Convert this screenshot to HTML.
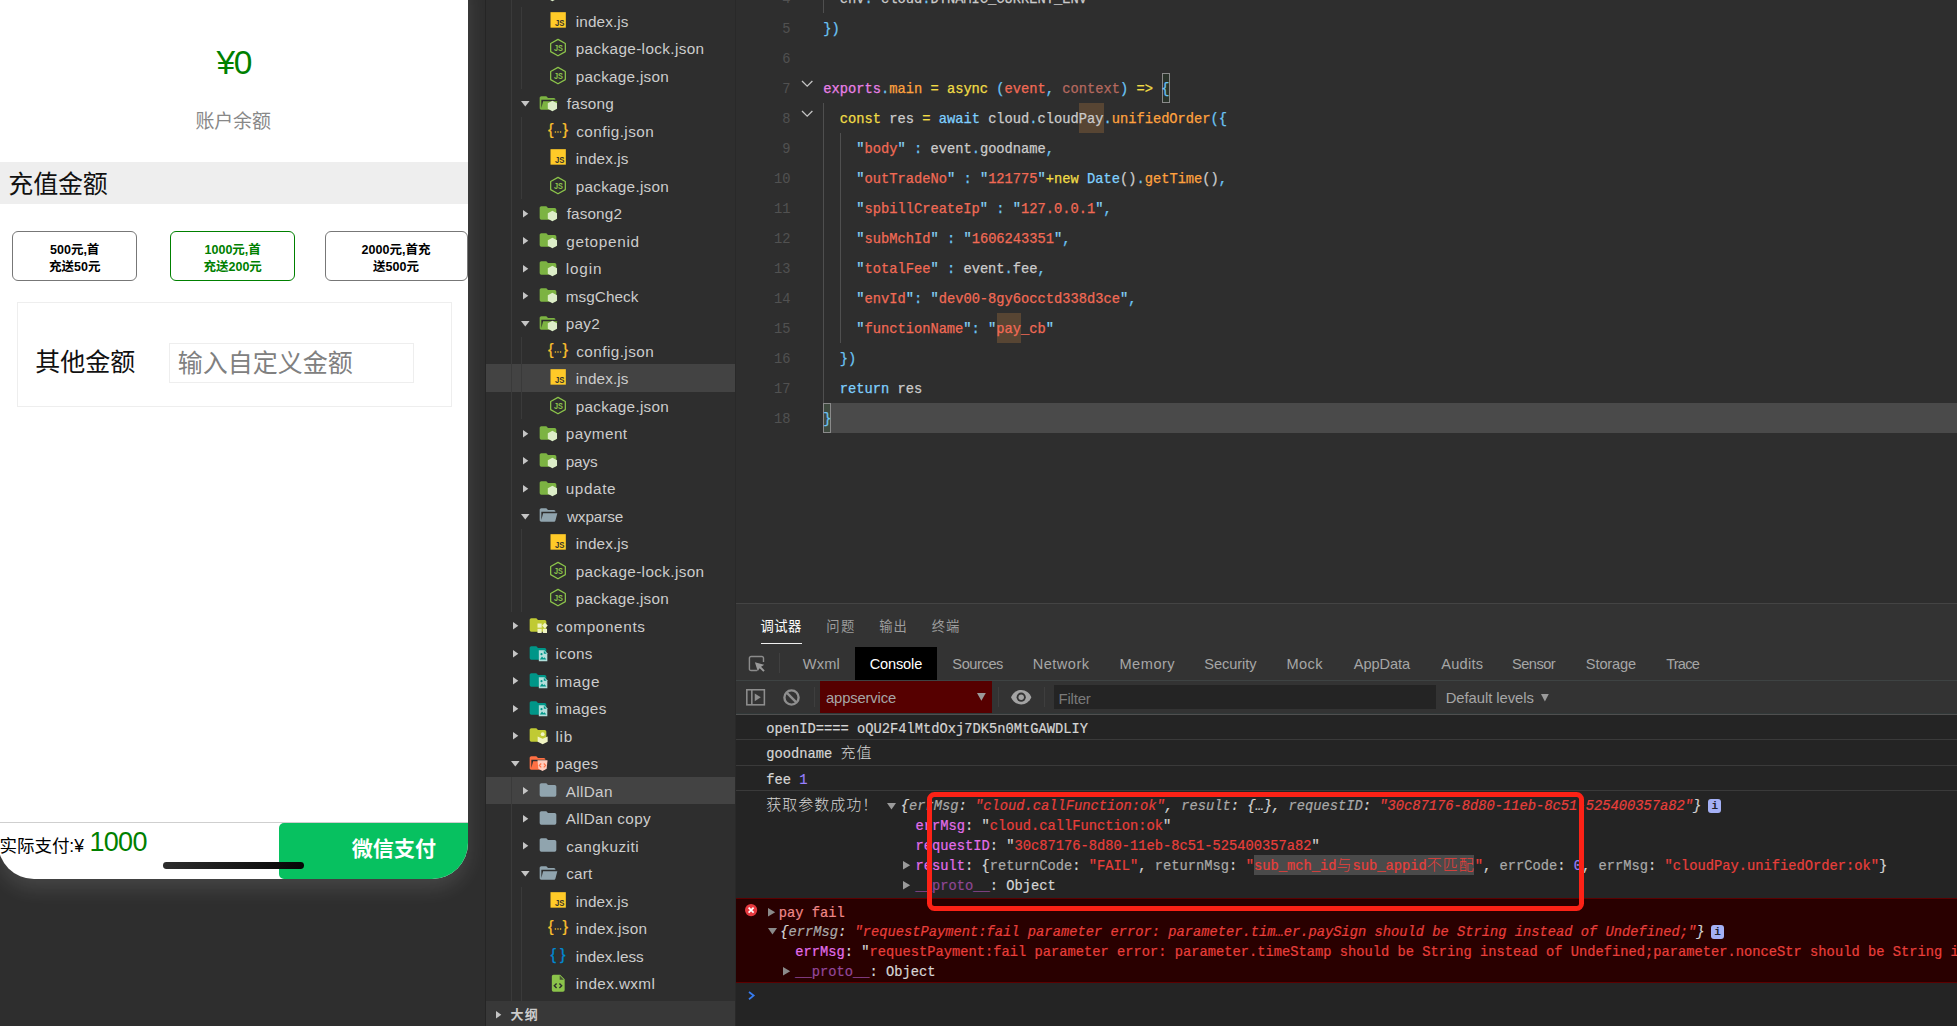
<!DOCTYPE html>
<html lang="zh-CN"><head><meta charset="utf-8"><title>pay2 index.js</title>
<style>
html,body{margin:0;padding:0;background:#2e2e2e;}
body{width:1957px;height:1026px;overflow:hidden;position:relative;font-family:'Liberation Sans','Noto Sans CJK SC',sans-serif;}
.a{position:absolute;box-sizing:border-box;}
.t{white-space:pre;}
svg{position:absolute;overflow:visible;}
.m{font-family:'Liberation Mono','Noto Sans CJK SC',monospace;}
.c{font-size:15px;letter-spacing:1px;font-weight:300;-webkit-text-stroke:0;}
.k2{-webkit-text-stroke:.2px currentColor;}
.k{-webkit-text-stroke:.25px currentColor;letter-spacing:-0.015px;}
</style></head>
<body>
<div class="a" style="left:0px;top:0px;width:485px;height:1026px;background:#2e2e2e;"></div>
<div class="a" style="left:485px;top:0px;width:1px;height:1026px;background:#252525;"></div>
<div class="a" style="left:-2px;top:-20px;width:470px;height:898.5px;background:#fff;border-radius:0 0 36px 36px;box-shadow:0 10px 20px rgba(255,255,255,.115);"></div>
<div class="a t " style="top:39.1px;height:47px;line-height:47px;font-size:33.5px;color:#008000;left:33.7px;width:400px;text-align:center;letter-spacing:-1.4px;"><span id="t1">¥0</span></div>
<div class="a t " style="top:108px;height:27px;line-height:27px;font-size:19px;color:#888;left:195.41px;letter-spacing:-0.17px;"><span id="t2">账户余额</span></div>
<div class="a" style="left:0px;top:162px;width:468px;height:42px;background:#eee;"></div>
<div class="a t " style="top:166.7px;height:35px;line-height:35px;font-size:25px;color:#111;left:8.33px;letter-spacing:-0.18px;"><span id="t3">充值金额</span></div>
<div class="a" style="left:12px;top:231px;width:125px;height:49.5px;border:1px solid #777;border-radius:6px;"></div>
<div class="a t " style="top:242px;height:17px;line-height:17px;font-size:12.5px;color:#000;left:-125.3px;width:400px;text-align:center;font-weight:bold;"><span id="t4">500元,首</span></div>
<div class="a t " style="top:258.9px;height:17px;line-height:17px;font-size:12.5px;color:#000;left:-125.3px;width:400px;text-align:center;font-weight:bold;"><span id="t5">充送50元</span></div>
<div class="a" style="left:170px;top:231px;width:125px;height:49.5px;border:1px solid #008000;border-radius:6px;"></div>
<div class="a t " style="top:242px;height:17px;line-height:17px;font-size:12.5px;color:#008000;left:32.7px;width:400px;text-align:center;font-weight:bold;"><span id="t6">1000元,首</span></div>
<div class="a t " style="top:258.9px;height:17px;line-height:17px;font-size:12.5px;color:#008000;left:32.7px;width:400px;text-align:center;font-weight:bold;"><span id="t7">充送200元</span></div>
<div class="a" style="left:325px;top:231px;width:142.5px;height:49.5px;border:1px solid #777;border-radius:6px;"></div>
<div class="a t " style="top:242px;height:17px;line-height:17px;font-size:12.5px;color:#000;left:196px;width:400px;text-align:center;font-weight:bold;"><span id="t8">2000元,首充</span></div>
<div class="a t " style="top:258.9px;height:17px;line-height:17px;font-size:12.5px;color:#000;left:196px;width:400px;text-align:center;font-weight:bold;"><span id="t9">送500元</span></div>
<div class="a" style="left:17px;top:302px;width:435px;height:105px;border:1px solid #eee;"></div>
<div class="a t " style="top:344.7px;height:35px;line-height:35px;font-size:25px;color:#111;left:35.22px;letter-spacing:0.02px;"><span id="t10">其他金额</span></div>
<div class="a" style="left:169px;top:343px;width:245px;height:40px;border:1px solid #eee;"></div>
<div class="a t " style="top:345.5px;height:35px;line-height:35px;font-size:25px;color:#808080;left:177.72px;letter-spacing:0.01px;"><span id="t11">输入自定义金额</span></div>
<div class="a" style="left:0px;top:822px;width:468px;height:1px;background:#cfcfcf;"></div>
<div class="a t " style="top:833.7px;height:24px;line-height:24px;font-size:17.5px;color:#000;left:-0.49px;letter-spacing:-0.04px;"><span id="t12">实际支付:¥</span></div>
<div class="a t " style="top:823.4px;height:38px;line-height:38px;font-size:27px;color:#008000;left:89.41px;letter-spacing:-0.67px;"><span id="t13">1000</span></div>
<div class="a" style="left:279px;top:823px;width:189px;height:55.5px;background:#07c160;border-radius:5px 0 36px 5px;"></div>
<div class="a t " style="top:834.4px;height:29px;line-height:29px;font-size:21px;color:#fff;left:351.8px;font-weight:bold;letter-spacing:0.05px;"><span id="t14">微信支付</span></div>
<div class="a" style="left:163px;top:862px;width:140.5px;height:6.7px;border-radius:3.4px;background:linear-gradient(90deg,#2d2d2d,#060606);"></div>
<div class="a" style="left:486px;top:0px;width:249px;height:1026px;background:#2e2e2e;"></div>
<div class="a" style="left:735px;top:0px;width:1px;height:1026px;background:#292929;"></div>
<div class="a" style="left:486px;top:364.25px;width:249px;height:27.5px;background:#434343;"></div>
<div class="a" style="left:486px;top:776.75px;width:249px;height:27.5px;background:#434343;"></div>
<div class="a" style="left:511px;top:0px;width:1px;height:611.75px;background:#3a3a3a;"></div>
<div class="a" style="left:511px;top:776.75px;width:1px;height:224.25px;background:#3a3a3a;"></div>
<div class="a" style="left:521px;top:6.75px;width:1px;height:82.5px;background:#3a3a3a;"></div>
<div class="a" style="left:521px;top:116.75px;width:1px;height:82.5px;background:#3a3a3a;"></div>
<div class="a" style="left:521px;top:336.75px;width:1px;height:82.5px;background:#3a3a3a;"></div>
<div class="a" style="left:521px;top:529.25px;width:1px;height:82.5px;background:#3a3a3a;"></div>
<div class="a" style="left:521px;top:886.75px;width:1px;height:114.25px;background:#3a3a3a;"></div>
<svg style="left:548px;top:10.5px" width="20" height="20" viewBox="0 0 24 24"><rect x="3" y="1.4" width="18.4" height="18.6" fill="#ffca28"/><text x="8.4" y="17.8" font-family='"Liberation Sans",sans-serif' font-weight="bold" font-size="10.6" textLength="11.4" lengthAdjust="spacingAndGlyphs" fill="#37352b">JS</text></svg>
<div class="a t " style="top:10.7px;height:22px;line-height:22px;font-size:15.3px;color:#cccccc;left:575.74px;letter-spacing:0.12px;"><span id="t15">index.js</span></div>
<svg style="left:548px;top:38px" width="20" height="20" viewBox="0 0 24 24"><path d="M12 1.6 20.8 6.6v9.700L12 21.3 3.2 16.3V6.600z" fill="none" stroke="#8bc34a" stroke-width="1.5" stroke-linejoin="round"/><text x="12.5" y="15.2" text-anchor="middle" font-family='"Liberation Sans",sans-serif' font-weight="bold" font-size="9.8" textLength="10.8" lengthAdjust="spacingAndGlyphs" fill="#8bc34a">JS</text></svg>
<div class="a t " style="top:38.2px;height:22px;line-height:22px;font-size:15.3px;color:#cccccc;left:575.74px;letter-spacing:0.37px;"><span id="t16">package-lock.json</span></div>
<svg style="left:548px;top:65.5px" width="20" height="20" viewBox="0 0 24 24"><path d="M12 1.6 20.8 6.6v9.700L12 21.3 3.2 16.3V6.600z" fill="none" stroke="#8bc34a" stroke-width="1.5" stroke-linejoin="round"/><text x="12.5" y="15.2" text-anchor="middle" font-family='"Liberation Sans",sans-serif' font-weight="bold" font-size="9.8" textLength="10.8" lengthAdjust="spacingAndGlyphs" fill="#8bc34a">JS</text></svg>
<div class="a t " style="top:65.7px;height:22px;line-height:22px;font-size:15.3px;color:#cccccc;left:575.74px;letter-spacing:0.26px;"><span id="t17">package.json</span></div>
<svg style="left:521.1px;top:101.2px" width="8.6" height="5.6" viewBox="0 0 8.6 5.6"><path d="M0 0h8.6L4.3 5.6z" fill="#c5c5c5"/></svg>
<svg style="left:538px;top:92.7px" width="20" height="20" viewBox="0 0 24 24"><path d="M19 20H4c-1.11 0-2-.9-2-2V6c0-1.11.89-2 2-2h6l2 2h7a2 2 0 0 1 2 2H4v10l2.14-8h17.07l-2.28 8.5c-.23.87-1.01 1.5-1.93 1.5z" fill="#7cb342"/><polygon points="17.30,9.20 22.84,12.40 22.84,18.80 17.30,22.00 11.76,18.80 11.76,12.40" fill="#dcedc8"/></svg>
<div class="a t " style="top:93.2px;height:22px;line-height:22px;font-size:15.3px;color:#cccccc;left:566.7px;letter-spacing:0.24px;"><span id="t18">fasong</span></div>
<svg style="left:548px;top:120.5px" width="20" height="20" viewBox="0 0 24 24"><text x="12" y="16.8" text-anchor="middle" font-family='"Liberation Sans",sans-serif' font-size="20" textLength="24" lengthAdjust="spacing" fill="#fbc02d" stroke="#fbc02d" stroke-width=".25">{ }</text><circle cx="8.9" cy="13.2" r="1" fill="#fbc02d"/><circle cx="12" cy="13.2" r="1" fill="#fbc02d"/><circle cx="15.1" cy="13.2" r="1" fill="#fbc02d"/></svg>
<div class="a t " style="top:120.7px;height:22px;line-height:22px;font-size:15.3px;color:#cccccc;left:576.22px;letter-spacing:0.44px;"><span id="t19">config.json</span></div>
<svg style="left:548px;top:148px" width="20" height="20" viewBox="0 0 24 24"><rect x="3" y="1.4" width="18.4" height="18.6" fill="#ffca28"/><text x="8.4" y="17.8" font-family='"Liberation Sans",sans-serif' font-weight="bold" font-size="10.6" textLength="11.4" lengthAdjust="spacingAndGlyphs" fill="#37352b">JS</text></svg>
<div class="a t " style="top:148.2px;height:22px;line-height:22px;font-size:15.3px;color:#cccccc;left:575.74px;letter-spacing:0.12px;"><span id="t20">index.js</span></div>
<svg style="left:548px;top:175.5px" width="20" height="20" viewBox="0 0 24 24"><path d="M12 1.6 20.8 6.6v9.700L12 21.3 3.2 16.3V6.600z" fill="none" stroke="#8bc34a" stroke-width="1.5" stroke-linejoin="round"/><text x="12.5" y="15.2" text-anchor="middle" font-family='"Liberation Sans",sans-serif' font-weight="bold" font-size="9.8" textLength="10.8" lengthAdjust="spacingAndGlyphs" fill="#8bc34a">JS</text></svg>
<div class="a t " style="top:175.7px;height:22px;line-height:22px;font-size:15.3px;color:#cccccc;left:575.74px;letter-spacing:0.26px;"><span id="t21">package.json</span></div>
<svg style="left:522.8px;top:209.7px" width="5.3" height="7.6" viewBox="0 0 5.3 7.6"><path d="M0 0v7.6L5.3 3.8z" fill="#c5c5c5"/></svg>
<svg style="left:538px;top:202.7px" width="20" height="20" viewBox="0 0 24 24"><path d="M10 4H4c-1.11 0-2 .89-2 2v12a2 2 0 0 0 2 2h16a2 2 0 0 0 2-2V8c0-1.11-.9-2-2-2h-8l-2-2z" fill="#7cb342"/><polygon points="17.30,9.20 22.84,12.40 22.84,18.80 17.30,22.00 11.76,18.80 11.76,12.40" fill="#dcedc8"/></svg>
<div class="a t " style="top:203.2px;height:22px;line-height:22px;font-size:15.3px;color:#cccccc;left:566.7px;letter-spacing:0.13px;"><span id="t22">fasong2</span></div>
<svg style="left:522.8px;top:237.2px" width="5.3" height="7.6" viewBox="0 0 5.3 7.6"><path d="M0 0v7.6L5.3 3.8z" fill="#c5c5c5"/></svg>
<svg style="left:538px;top:230.2px" width="20" height="20" viewBox="0 0 24 24"><path d="M10 4H4c-1.11 0-2 .89-2 2v12a2 2 0 0 0 2 2h16a2 2 0 0 0 2-2V8c0-1.11-.9-2-2-2h-8l-2-2z" fill="#7cb342"/><polygon points="17.30,9.20 22.84,12.40 22.84,18.80 17.30,22.00 11.76,18.80 11.76,12.40" fill="#dcedc8"/></svg>
<div class="a t " style="top:230.7px;height:22px;line-height:22px;font-size:15.3px;color:#cccccc;left:566.22px;letter-spacing:0.71px;"><span id="t23">getopenid</span></div>
<svg style="left:522.8px;top:264.7px" width="5.3" height="7.6" viewBox="0 0 5.3 7.6"><path d="M0 0v7.6L5.3 3.8z" fill="#c5c5c5"/></svg>
<svg style="left:538px;top:257.7px" width="20" height="20" viewBox="0 0 24 24"><path d="M10 4H4c-1.11 0-2 .89-2 2v12a2 2 0 0 0 2 2h16a2 2 0 0 0 2-2V8c0-1.11-.9-2-2-2h-8l-2-2z" fill="#7cb342"/><polygon points="17.30,9.20 22.84,12.40 22.84,18.80 17.30,22.00 11.76,18.80 11.76,12.40" fill="#dcedc8"/></svg>
<div class="a t " style="top:258.2px;height:22px;line-height:22px;font-size:15.3px;color:#cccccc;left:565.74px;letter-spacing:0.85px;"><span id="t24">login</span></div>
<svg style="left:522.8px;top:292.2px" width="5.3" height="7.6" viewBox="0 0 5.3 7.6"><path d="M0 0v7.6L5.3 3.8z" fill="#c5c5c5"/></svg>
<svg style="left:538px;top:285.2px" width="20" height="20" viewBox="0 0 24 24"><path d="M10 4H4c-1.11 0-2 .89-2 2v12a2 2 0 0 0 2 2h16a2 2 0 0 0 2-2V8c0-1.11-.9-2-2-2h-8l-2-2z" fill="#7cb342"/><polygon points="17.30,9.20 22.84,12.40 22.84,18.80 17.30,22.00 11.76,18.80 11.76,12.40" fill="#dcedc8"/></svg>
<div class="a t " style="top:285.7px;height:22px;line-height:22px;font-size:15.3px;color:#cccccc;left:565.74px;letter-spacing:0.05px;"><span id="t25">msgCheck</span></div>
<svg style="left:521.1px;top:321.2px" width="8.6" height="5.6" viewBox="0 0 8.6 5.6"><path d="M0 0h8.6L4.3 5.6z" fill="#c5c5c5"/></svg>
<svg style="left:538px;top:312.7px" width="20" height="20" viewBox="0 0 24 24"><path d="M19 20H4c-1.11 0-2-.9-2-2V6c0-1.11.89-2 2-2h6l2 2h7a2 2 0 0 1 2 2H4v10l2.14-8h17.07l-2.28 8.5c-.23.87-1.01 1.5-1.93 1.5z" fill="#7cb342"/><polygon points="17.30,9.20 22.84,12.40 22.84,18.80 17.30,22.00 11.76,18.80 11.76,12.40" fill="#dcedc8"/></svg>
<div class="a t " style="top:313.2px;height:22px;line-height:22px;font-size:15.3px;color:#cccccc;left:565.74px;letter-spacing:0.27px;"><span id="t26">pay2</span></div>
<svg style="left:548px;top:340.5px" width="20" height="20" viewBox="0 0 24 24"><text x="12" y="16.8" text-anchor="middle" font-family='"Liberation Sans",sans-serif' font-size="20" textLength="24" lengthAdjust="spacing" fill="#fbc02d" stroke="#fbc02d" stroke-width=".25">{ }</text><circle cx="8.9" cy="13.2" r="1" fill="#fbc02d"/><circle cx="12" cy="13.2" r="1" fill="#fbc02d"/><circle cx="15.1" cy="13.2" r="1" fill="#fbc02d"/></svg>
<div class="a t " style="top:340.7px;height:22px;line-height:22px;font-size:15.3px;color:#cccccc;left:576.22px;letter-spacing:0.44px;"><span id="t27">config.json</span></div>
<svg style="left:548px;top:368px" width="20" height="20" viewBox="0 0 24 24"><rect x="3" y="1.4" width="18.4" height="18.6" fill="#ffca28"/><text x="8.4" y="17.8" font-family='"Liberation Sans",sans-serif' font-weight="bold" font-size="10.6" textLength="11.4" lengthAdjust="spacingAndGlyphs" fill="#37352b">JS</text></svg>
<div class="a t " style="top:368.2px;height:22px;line-height:22px;font-size:15.3px;color:#cccccc;left:575.74px;letter-spacing:0.12px;"><span id="t28">index.js</span></div>
<svg style="left:548px;top:395.5px" width="20" height="20" viewBox="0 0 24 24"><path d="M12 1.6 20.8 6.6v9.700L12 21.3 3.2 16.3V6.600z" fill="none" stroke="#8bc34a" stroke-width="1.5" stroke-linejoin="round"/><text x="12.5" y="15.2" text-anchor="middle" font-family='"Liberation Sans",sans-serif' font-weight="bold" font-size="9.8" textLength="10.8" lengthAdjust="spacingAndGlyphs" fill="#8bc34a">JS</text></svg>
<div class="a t " style="top:395.7px;height:22px;line-height:22px;font-size:15.3px;color:#cccccc;left:575.74px;letter-spacing:0.26px;"><span id="t29">package.json</span></div>
<svg style="left:522.8px;top:429.7px" width="5.3" height="7.6" viewBox="0 0 5.3 7.6"><path d="M0 0v7.6L5.3 3.8z" fill="#c5c5c5"/></svg>
<svg style="left:538px;top:422.7px" width="20" height="20" viewBox="0 0 24 24"><path d="M10 4H4c-1.11 0-2 .89-2 2v12a2 2 0 0 0 2 2h16a2 2 0 0 0 2-2V8c0-1.11-.9-2-2-2h-8l-2-2z" fill="#7cb342"/><polygon points="17.30,9.20 22.84,12.40 22.84,18.80 17.30,22.00 11.76,18.80 11.76,12.40" fill="#dcedc8"/></svg>
<div class="a t " style="top:423.2px;height:22px;line-height:22px;font-size:15.3px;color:#cccccc;left:565.74px;letter-spacing:0.45px;"><span id="t30">payment</span></div>
<svg style="left:522.8px;top:457.2px" width="5.3" height="7.6" viewBox="0 0 5.3 7.6"><path d="M0 0v7.6L5.3 3.8z" fill="#c5c5c5"/></svg>
<svg style="left:538px;top:450.2px" width="20" height="20" viewBox="0 0 24 24"><path d="M10 4H4c-1.11 0-2 .89-2 2v12a2 2 0 0 0 2 2h16a2 2 0 0 0 2-2V8c0-1.11-.9-2-2-2h-8l-2-2z" fill="#7cb342"/><polygon points="17.30,9.20 22.84,12.40 22.84,18.80 17.30,22.00 11.76,18.80 11.76,12.40" fill="#dcedc8"/></svg>
<div class="a t " style="top:450.7px;height:22px;line-height:22px;font-size:15.3px;color:#cccccc;left:565.74px;letter-spacing:-0.13px;"><span id="t31">pays</span></div>
<svg style="left:522.8px;top:484.7px" width="5.3" height="7.6" viewBox="0 0 5.3 7.6"><path d="M0 0v7.6L5.3 3.8z" fill="#c5c5c5"/></svg>
<svg style="left:538px;top:477.7px" width="20" height="20" viewBox="0 0 24 24"><path d="M10 4H4c-1.11 0-2 .89-2 2v12a2 2 0 0 0 2 2h16a2 2 0 0 0 2-2V8c0-1.11-.9-2-2-2h-8l-2-2z" fill="#7cb342"/><polygon points="17.30,9.20 22.84,12.40 22.84,18.80 17.30,22.00 11.76,18.80 11.76,12.40" fill="#dcedc8"/></svg>
<div class="a t " style="top:478.2px;height:22px;line-height:22px;font-size:15.3px;color:#cccccc;left:565.74px;letter-spacing:0.62px;"><span id="t32">update</span></div>
<svg style="left:521.1px;top:513.7px" width="8.6" height="5.6" viewBox="0 0 8.6 5.6"><path d="M0 0h8.6L4.3 5.6z" fill="#c5c5c5"/></svg>
<svg style="left:538px;top:505.2px" width="20" height="20" viewBox="0 0 24 24"><path d="M19 20H4c-1.11 0-2-.9-2-2V6c0-1.11.89-2 2-2h6l2 2h7a2 2 0 0 1 2 2H4v10l2.14-8h17.07l-2.28 8.5c-.23.87-1.01 1.5-1.93 1.5z" fill="#90a4ae"/></svg>
<div class="a t " style="top:505.7px;height:22px;line-height:22px;font-size:15.3px;color:#cccccc;left:566.94px;letter-spacing:-0.12px;"><span id="t33">wxparse</span></div>
<svg style="left:548px;top:533px" width="20" height="20" viewBox="0 0 24 24"><rect x="3" y="1.4" width="18.4" height="18.6" fill="#ffca28"/><text x="8.4" y="17.8" font-family='"Liberation Sans",sans-serif' font-weight="bold" font-size="10.6" textLength="11.4" lengthAdjust="spacingAndGlyphs" fill="#37352b">JS</text></svg>
<div class="a t " style="top:533.2px;height:22px;line-height:22px;font-size:15.3px;color:#cccccc;left:575.74px;letter-spacing:0.12px;"><span id="t34">index.js</span></div>
<svg style="left:548px;top:560.5px" width="20" height="20" viewBox="0 0 24 24"><path d="M12 1.6 20.8 6.6v9.700L12 21.3 3.2 16.3V6.600z" fill="none" stroke="#8bc34a" stroke-width="1.5" stroke-linejoin="round"/><text x="12.5" y="15.2" text-anchor="middle" font-family='"Liberation Sans",sans-serif' font-weight="bold" font-size="9.8" textLength="10.8" lengthAdjust="spacingAndGlyphs" fill="#8bc34a">JS</text></svg>
<div class="a t " style="top:560.7px;height:22px;line-height:22px;font-size:15.3px;color:#cccccc;left:575.74px;letter-spacing:0.37px;"><span id="t35">package-lock.json</span></div>
<svg style="left:548px;top:588px" width="20" height="20" viewBox="0 0 24 24"><path d="M12 1.6 20.8 6.6v9.700L12 21.3 3.2 16.3V6.600z" fill="none" stroke="#8bc34a" stroke-width="1.5" stroke-linejoin="round"/><text x="12.5" y="15.2" text-anchor="middle" font-family='"Liberation Sans",sans-serif' font-weight="bold" font-size="9.8" textLength="10.8" lengthAdjust="spacingAndGlyphs" fill="#8bc34a">JS</text></svg>
<div class="a t " style="top:588.2px;height:22px;line-height:22px;font-size:15.3px;color:#cccccc;left:575.74px;letter-spacing:0.26px;"><span id="t36">package.json</span></div>
<svg style="left:513px;top:622.2px" width="5.3" height="7.6" viewBox="0 0 5.3 7.6"><path d="M0 0v7.6L5.3 3.8z" fill="#c5c5c5"/></svg>
<svg style="left:528px;top:615.2px" width="20" height="20" viewBox="0 0 24 24"><path d="M10 4H4c-1.11 0-2 .89-2 2v12a2 2 0 0 0 2 2h16a2 2 0 0 0 2-2V8c0-1.11-.9-2-2-2h-8l-2-2z" fill="#c0ca33"/><g fill="#f0f4c3"><rect x="11.4" y="10.2" width="5" height="5"/><rect x="11.4" y="16.6" width="5" height="5"/><rect x="17.8" y="16.6" width="5" height="5"/><path d="M20.3 9.2l3.4 3.5-3.4 3.5-3.4-3.5z"/></g></svg>
<div class="a t " style="top:615.7px;height:22px;line-height:22px;font-size:15.3px;color:#cccccc;left:555.92px;letter-spacing:0.63px;"><span id="t37">components</span></div>
<svg style="left:513px;top:649.7px" width="5.3" height="7.6" viewBox="0 0 5.3 7.6"><path d="M0 0v7.6L5.3 3.8z" fill="#c5c5c5"/></svg>
<svg style="left:528px;top:642.7px" width="20" height="20" viewBox="0 0 24 24"><path d="M10 4H4c-1.11 0-2 .89-2 2v12a2 2 0 0 0 2 2h16a2 2 0 0 0 2-2V8c0-1.11-.9-2-2-2h-8l-2-2z" fill="#009688"/><path d="M13 8.6h6.6l3.6 3.6v9.6H13z" fill="#b2dfdb"/><path d="M19 9.4v3.4h3.4z" fill="#009688"/><path d="M14.2 19.8l2.6-3.6 1.8 2.2 1.2-1.2 2.2 2.6z" fill="#009688"/><circle cx="16.2" cy="13.4" r="1.3" fill="#009688"/></svg>
<div class="a t " style="top:643.2px;height:22px;line-height:22px;font-size:15.3px;color:#cccccc;left:555.44px;letter-spacing:0.33px;"><span id="t38">icons</span></div>
<svg style="left:513px;top:677.2px" width="5.3" height="7.6" viewBox="0 0 5.3 7.6"><path d="M0 0v7.6L5.3 3.8z" fill="#c5c5c5"/></svg>
<svg style="left:528px;top:670.2px" width="20" height="20" viewBox="0 0 24 24"><path d="M10 4H4c-1.11 0-2 .89-2 2v12a2 2 0 0 0 2 2h16a2 2 0 0 0 2-2V8c0-1.11-.9-2-2-2h-8l-2-2z" fill="#009688"/><path d="M13 8.6h6.6l3.6 3.6v9.6H13z" fill="#b2dfdb"/><path d="M19 9.4v3.4h3.4z" fill="#009688"/><path d="M14.2 19.8l2.6-3.6 1.8 2.2 1.2-1.2 2.2 2.6z" fill="#009688"/><circle cx="16.2" cy="13.4" r="1.3" fill="#009688"/></svg>
<div class="a t " style="top:670.7px;height:22px;line-height:22px;font-size:15.3px;color:#cccccc;left:555.44px;letter-spacing:0.58px;"><span id="t39">image</span></div>
<svg style="left:513px;top:704.7px" width="5.3" height="7.6" viewBox="0 0 5.3 7.6"><path d="M0 0v7.6L5.3 3.8z" fill="#c5c5c5"/></svg>
<svg style="left:528px;top:697.7px" width="20" height="20" viewBox="0 0 24 24"><path d="M10 4H4c-1.11 0-2 .89-2 2v12a2 2 0 0 0 2 2h16a2 2 0 0 0 2-2V8c0-1.11-.9-2-2-2h-8l-2-2z" fill="#009688"/><path d="M13 8.6h6.6l3.6 3.6v9.6H13z" fill="#b2dfdb"/><path d="M19 9.4v3.4h3.4z" fill="#009688"/><path d="M14.2 19.8l2.6-3.6 1.8 2.2 1.2-1.2 2.2 2.6z" fill="#009688"/><circle cx="16.2" cy="13.4" r="1.3" fill="#009688"/></svg>
<div class="a t " style="top:698.2px;height:22px;line-height:22px;font-size:15.3px;color:#cccccc;left:555.44px;letter-spacing:0.32px;"><span id="t40">images</span></div>
<svg style="left:513px;top:732.2px" width="5.3" height="7.6" viewBox="0 0 5.3 7.6"><path d="M0 0v7.6L5.3 3.8z" fill="#c5c5c5"/></svg>
<svg style="left:528px;top:725.2px" width="20" height="20" viewBox="0 0 24 24"><path d="M10 4H4c-1.11 0-2 .89-2 2v12a2 2 0 0 0 2 2h16a2 2 0 0 0 2-2V8c0-1.11-.9-2-2-2h-8l-2-2z" fill="#c0ca33"/><g fill="#f0f4c3"><circle cx="17.6" cy="11" r="2.3"/><path d="M11.6 13.8l6 2.6 6-2.6v6.4l-6 2.8-6-2.8z"/></g></svg>
<div class="a t " style="top:725.7px;height:22px;line-height:22px;font-size:15.3px;color:#cccccc;left:555.44px;letter-spacing:0.78px;"><span id="t41">lib</span></div>
<svg style="left:511.3px;top:761.2px" width="8.6" height="5.6" viewBox="0 0 8.6 5.6"><path d="M0 0h8.6L4.3 5.6z" fill="#c5c5c5"/></svg>
<svg style="left:528px;top:752.7px" width="20" height="20" viewBox="0 0 24 24"><path d="M19 20H4c-1.11 0-2-.9-2-2V6c0-1.11.89-2 2-2h6l2 2h7a2 2 0 0 1 2 2H4v10l2.14-8h17.07l-2.28 8.5c-.23.87-1.01 1.5-1.93 1.5z" fill="#ff7043"/><path d="M11.4 8.8h12l-1 10.2-5 2.6-5-2.6z" fill="#ffccbc"/><path d="M15.9 12.6l-2.3 2.3 2.3 2.3M18.9 12.6l2.3 2.3-2.3 2.3" fill="none" stroke="#ff7043" stroke-width="1.4"/></svg>
<div class="a t " style="top:753.2px;height:22px;line-height:22px;font-size:15.3px;color:#cccccc;left:555.44px;letter-spacing:0.26px;"><span id="t42">pages</span></div>
<svg style="left:522.8px;top:787.2px" width="5.3" height="7.6" viewBox="0 0 5.3 7.6"><path d="M0 0v7.6L5.3 3.8z" fill="#c5c5c5"/></svg>
<svg style="left:538px;top:780.2px" width="20" height="20" viewBox="0 0 24 24"><path d="M10 4H4c-1.11 0-2 .89-2 2v12a2 2 0 0 0 2 2h16a2 2 0 0 0 2-2V8c0-1.11-.9-2-2-2h-8l-2-2z" fill="#90a4ae"/></svg>
<div class="a t " style="top:780.7px;height:22px;line-height:22px;font-size:15.3px;color:#cccccc;left:565.8px;letter-spacing:0.32px;"><span id="t43">AllDan</span></div>
<svg style="left:522.8px;top:814.7px" width="5.3" height="7.6" viewBox="0 0 5.3 7.6"><path d="M0 0v7.6L5.3 3.8z" fill="#c5c5c5"/></svg>
<svg style="left:538px;top:807.7px" width="20" height="20" viewBox="0 0 24 24"><path d="M10 4H4c-1.11 0-2 .89-2 2v12a2 2 0 0 0 2 2h16a2 2 0 0 0 2-2V8c0-1.11-.9-2-2-2h-8l-2-2z" fill="#90a4ae"/></svg>
<div class="a t " style="top:808.2px;height:22px;line-height:22px;font-size:15.3px;color:#cccccc;left:565.8px;letter-spacing:0.32px;"><span id="t44">AllDan copy</span></div>
<svg style="left:522.8px;top:842.2px" width="5.3" height="7.6" viewBox="0 0 5.3 7.6"><path d="M0 0v7.6L5.3 3.8z" fill="#c5c5c5"/></svg>
<svg style="left:538px;top:835.2px" width="20" height="20" viewBox="0 0 24 24"><path d="M10 4H4c-1.11 0-2 .89-2 2v12a2 2 0 0 0 2 2h16a2 2 0 0 0 2-2V8c0-1.11-.9-2-2-2h-8l-2-2z" fill="#90a4ae"/></svg>
<div class="a t " style="top:835.7px;height:22px;line-height:22px;font-size:15.3px;color:#cccccc;left:566.22px;letter-spacing:0.48px;"><span id="t45">cangkuziti</span></div>
<svg style="left:521.1px;top:871.2px" width="8.6" height="5.6" viewBox="0 0 8.6 5.6"><path d="M0 0h8.6L4.3 5.6z" fill="#c5c5c5"/></svg>
<svg style="left:538px;top:862.7px" width="20" height="20" viewBox="0 0 24 24"><path d="M19 20H4c-1.11 0-2-.9-2-2V6c0-1.11.89-2 2-2h6l2 2h7a2 2 0 0 1 2 2H4v10l2.14-8h17.07l-2.28 8.5c-.23.87-1.01 1.5-1.93 1.5z" fill="#90a4ae"/></svg>
<div class="a t " style="top:863.2px;height:22px;line-height:22px;font-size:15.3px;color:#cccccc;left:566.22px;letter-spacing:0.21px;"><span id="t46">cart</span></div>
<svg style="left:548px;top:890.5px" width="20" height="20" viewBox="0 0 24 24"><rect x="3" y="1.4" width="18.4" height="18.6" fill="#ffca28"/><text x="8.4" y="17.8" font-family='"Liberation Sans",sans-serif' font-weight="bold" font-size="10.6" textLength="11.4" lengthAdjust="spacingAndGlyphs" fill="#37352b">JS</text></svg>
<div class="a t " style="top:890.7px;height:22px;line-height:22px;font-size:15.3px;color:#cccccc;left:575.74px;letter-spacing:0.12px;"><span id="t47">index.js</span></div>
<svg style="left:548px;top:918px" width="20" height="20" viewBox="0 0 24 24"><text x="12" y="16.8" text-anchor="middle" font-family='"Liberation Sans",sans-serif' font-size="20" textLength="24" lengthAdjust="spacing" fill="#fbc02d" stroke="#fbc02d" stroke-width=".25">{ }</text><circle cx="8.9" cy="13.2" r="1" fill="#fbc02d"/><circle cx="12" cy="13.2" r="1" fill="#fbc02d"/><circle cx="15.1" cy="13.2" r="1" fill="#fbc02d"/></svg>
<div class="a t " style="top:918.2px;height:22px;line-height:22px;font-size:15.3px;color:#cccccc;left:575.74px;letter-spacing:0.26px;"><span id="t48">index.json</span></div>
<svg style="left:548px;top:945.5px" width="20" height="20" viewBox="0 0 24 24"><text x="12" y="16.8" text-anchor="middle" font-family='"Liberation Sans",sans-serif' font-size="20" textLength="18" lengthAdjust="spacing" fill="#0288d1" stroke="#0288d1" stroke-width=".3">{ }</text></svg>
<div class="a t " style="top:945.7px;height:22px;line-height:22px;font-size:15.3px;color:#cccccc;left:575.74px;"><span id="t49">index.less</span></div>
<svg style="left:548px;top:973px" width="20" height="20" viewBox="0 0 24 24"><path d="M6.600 2h8l5.400 5.400v13a2 2 0 0 1-2 2H6.600a2 2 0 0 1-2-2V4a2 2 0 0 1 2-2z" fill="#8bc34a"/><path d="M14 3v5h5z" fill="#2e2e2e" opacity=".75"/><path d="M10.3 12.6 7.6 15.3l2.7 2.7M13.7 12.6l2.7 2.7-2.7 2.7" fill="none" stroke="#2e2e2e" stroke-width="1.7"/></svg>
<div class="a t " style="top:973.2px;height:22px;line-height:22px;font-size:15.3px;color:#cccccc;left:575.74px;letter-spacing:0.39px;"><span id="t50">index.wxml</span></div>
<svg style="left:538px;top:-17.3px" width="20" height="20" viewBox="0 0 24 24"><path d="M19 20H4c-1.11 0-2-.9-2-2V6c0-1.11.89-2 2-2h6l2 2h7a2 2 0 0 1 2 2H4v10l2.14-8h17.07l-2.28 8.5c-.23.87-1.01 1.5-1.93 1.5z" fill="#7cb342"/><polygon points="17.30,9.20 22.84,12.40 22.84,18.80 17.30,22.00 11.76,18.80 11.76,12.40" fill="#dcedc8"/></svg>
<div class="a" style="left:486px;top:1001px;width:249px;height:25px;background:#383838;"></div>
<svg style="left:496.4px;top:1010.5px" width="5.3" height="7.6" viewBox="0 0 5.3 7.6"><path d="M0 0v7.6L5.3 3.8z" fill="#c5c5c5"/></svg>
<div class="a t " style="top:1005px;height:20px;line-height:20px;font-size:13px;color:#cccccc;left:510.59px;font-weight:bold;letter-spacing:1.12px;"><span id="t51">大纲</span></div>
<div class="a" style="left:736px;top:0px;width:1221px;height:603px;background:#2e2e2e;"></div>
<div class="a" style="left:823px;top:403px;width:1134px;height:30px;background:#4a4a4a;"></div>
<div class="a" style="left:1079.05px;top:103px;width:24.75px;height:30px;background:#574533;"></div>
<div class="a" style="left:996.55px;top:313px;width:24.75px;height:30px;background:#574533;"></div>
<div class="a" style="left:1162px;top:73px;width:8px;height:30px;background:#2a332a;border:1px solid #8a8a8a;"></div>
<div class="a" style="left:823px;top:403px;width:8px;height:30px;background:#3f4a3f;border:1px solid #8a8a8a;"></div>
<div class="a" style="left:823px;top:0px;width:1px;height:13px;background:#4f4f4f;"></div>
<div class="a" style="left:823px;top:103px;width:1px;height:300px;background:#4f4f4f;"></div>
<div class="a" style="left:840px;top:133px;width:1px;height:210px;background:#4f4f4f;"></div>
<div class="a t " style="top:-15.3px;height:30px;line-height:30px;font-size:13.75px;color:#515151;left:390.5px;width:400px;text-align:right;font-family:'Liberation Mono','Noto Sans CJK SC',monospace;"><span id="t52">4</span></div>
<div class="a t k" style="top:-14.9px;height:30px;line-height:30px;font-size:13.75px;color:#cbcbcb;left:823.3px;font-family:'Liberation Mono','Noto Sans CJK SC',monospace;"><span id="t53">  <span style="color:#cbcbcb">env</span><span style="color:#6cc4f5">: </span><span style="color:#cbcbcb">cloud</span><span style="color:#6cc4f5">.</span><span style="color:#cbcbcb">DYNAMIC_CURRENT_ENV</span></span></div>
<div class="a t " style="top:14.7px;height:30px;line-height:30px;font-size:13.75px;color:#515151;left:390.5px;width:400px;text-align:right;font-family:'Liberation Mono','Noto Sans CJK SC',monospace;"><span id="t54">5</span></div>
<div class="a t k" style="top:15.1px;height:30px;line-height:30px;font-size:13.75px;color:#cbcbcb;left:823.3px;font-family:'Liberation Mono','Noto Sans CJK SC',monospace;"><span id="t55"><span style="color:#6cc4f5">})</span></span></div>
<div class="a t " style="top:44.7px;height:30px;line-height:30px;font-size:13.75px;color:#515151;left:390.5px;width:400px;text-align:right;font-family:'Liberation Mono','Noto Sans CJK SC',monospace;"><span id="t56">6</span></div>
<div class="a t " style="top:74.7px;height:30px;line-height:30px;font-size:13.75px;color:#515151;left:390.5px;width:400px;text-align:right;font-family:'Liberation Mono','Noto Sans CJK SC',monospace;"><span id="t57">7</span></div>
<div class="a t k" style="top:75.1px;height:30px;line-height:30px;font-size:13.75px;color:#cbcbcb;left:823.3px;font-family:'Liberation Mono','Noto Sans CJK SC',monospace;"><span id="t58"><span style="color:#e980e6">exports</span><span style="color:#6cc4f5">.</span><span style="color:#ffa23e">main</span> <span style="color:#f0dc46">=</span> <span style="color:#f0dc46">async</span> <span style="color:#6cc4f5">(</span><span style="color:#f16a55">event</span><span style="color:#6cc4f5">,</span> <span style="color:#b5695f">context</span><span style="color:#6cc4f5">)</span> <span style="color:#f0dc46">=&gt;</span> <span style="color:#6cc4f5">{</span></span></div>
<div class="a t " style="top:104.7px;height:30px;line-height:30px;font-size:13.75px;color:#515151;left:390.5px;width:400px;text-align:right;font-family:'Liberation Mono','Noto Sans CJK SC',monospace;"><span id="t59">8</span></div>
<div class="a t k" style="top:105.1px;height:30px;line-height:30px;font-size:13.75px;color:#cbcbcb;left:823.3px;font-family:'Liberation Mono','Noto Sans CJK SC',monospace;"><span id="t60">  <span style="color:#f0dc46">const</span> <span style="color:#cbcbcb">res</span> <span style="color:#f0dc46">=</span> <span style="color:#7fd0ff">await</span> <span style="color:#cbcbcb">cloud</span><span style="color:#6cc4f5">.</span><span style="color:#cbcbcb">cloudPay</span><span style="color:#6cc4f5">.</span><span style="color:#ffa23e">unifiedOrder</span><span style="color:#6cc4f5">({</span></span></div>
<div class="a t " style="top:134.7px;height:30px;line-height:30px;font-size:13.75px;color:#515151;left:390.5px;width:400px;text-align:right;font-family:'Liberation Mono','Noto Sans CJK SC',monospace;"><span id="t61">9</span></div>
<div class="a t k" style="top:135.1px;height:30px;line-height:30px;font-size:13.75px;color:#cbcbcb;left:823.3px;font-family:'Liberation Mono','Noto Sans CJK SC',monospace;"><span id="t62">    <span style="color:#86d2f7">"</span><span style="color:#f16a55">body</span><span style="color:#86d2f7">"</span> <span style="color:#6cc4f5">:</span> <span style="color:#cbcbcb">event</span><span style="color:#6cc4f5">.</span><span style="color:#cbcbcb">goodname</span><span style="color:#6cc4f5">,</span></span></div>
<div class="a t " style="top:164.7px;height:30px;line-height:30px;font-size:13.75px;color:#515151;left:390.5px;width:400px;text-align:right;font-family:'Liberation Mono','Noto Sans CJK SC',monospace;"><span id="t63">10</span></div>
<div class="a t k" style="top:165.1px;height:30px;line-height:30px;font-size:13.75px;color:#cbcbcb;left:823.3px;font-family:'Liberation Mono','Noto Sans CJK SC',monospace;"><span id="t64">    <span style="color:#86d2f7">"</span><span style="color:#f16a55">outTradeNo</span><span style="color:#86d2f7">"</span> <span style="color:#6cc4f5">:</span> <span style="color:#86d2f7">"</span><span style="color:#f16a55">121775</span><span style="color:#86d2f7">"</span><span style="color:#f0dc46">+new</span> <span style="color:#7fd0ff">Date</span><span style="color:#cbcbcb">()</span><span style="color:#6cc4f5">.</span><span style="color:#ffa23e">getTime</span><span style="color:#cbcbcb">()</span><span style="color:#6cc4f5">,</span></span></div>
<div class="a t " style="top:194.7px;height:30px;line-height:30px;font-size:13.75px;color:#515151;left:390.5px;width:400px;text-align:right;font-family:'Liberation Mono','Noto Sans CJK SC',monospace;"><span id="t65">11</span></div>
<div class="a t k" style="top:195.1px;height:30px;line-height:30px;font-size:13.75px;color:#cbcbcb;left:823.3px;font-family:'Liberation Mono','Noto Sans CJK SC',monospace;"><span id="t66">    <span style="color:#86d2f7">"</span><span style="color:#f16a55">spbillCreateIp</span><span style="color:#86d2f7">"</span> <span style="color:#6cc4f5">:</span> <span style="color:#86d2f7">"</span><span style="color:#f16a55">127.0.0.1</span><span style="color:#86d2f7">"</span><span style="color:#6cc4f5">,</span></span></div>
<div class="a t " style="top:224.7px;height:30px;line-height:30px;font-size:13.75px;color:#515151;left:390.5px;width:400px;text-align:right;font-family:'Liberation Mono','Noto Sans CJK SC',monospace;"><span id="t67">12</span></div>
<div class="a t k" style="top:225.1px;height:30px;line-height:30px;font-size:13.75px;color:#cbcbcb;left:823.3px;font-family:'Liberation Mono','Noto Sans CJK SC',monospace;"><span id="t68">    <span style="color:#86d2f7">"</span><span style="color:#f16a55">subMchId</span><span style="color:#86d2f7">"</span> <span style="color:#6cc4f5">:</span> <span style="color:#86d2f7">"</span><span style="color:#f16a55">1606243351</span><span style="color:#86d2f7">"</span><span style="color:#6cc4f5">,</span></span></div>
<div class="a t " style="top:254.7px;height:30px;line-height:30px;font-size:13.75px;color:#515151;left:390.5px;width:400px;text-align:right;font-family:'Liberation Mono','Noto Sans CJK SC',monospace;"><span id="t69">13</span></div>
<div class="a t k" style="top:255.1px;height:30px;line-height:30px;font-size:13.75px;color:#cbcbcb;left:823.3px;font-family:'Liberation Mono','Noto Sans CJK SC',monospace;"><span id="t70">    <span style="color:#86d2f7">"</span><span style="color:#f16a55">totalFee</span><span style="color:#86d2f7">"</span> <span style="color:#6cc4f5">:</span> <span style="color:#cbcbcb">event</span><span style="color:#6cc4f5">.</span><span style="color:#cbcbcb">fee</span><span style="color:#6cc4f5">,</span></span></div>
<div class="a t " style="top:284.7px;height:30px;line-height:30px;font-size:13.75px;color:#515151;left:390.5px;width:400px;text-align:right;font-family:'Liberation Mono','Noto Sans CJK SC',monospace;"><span id="t71">14</span></div>
<div class="a t k" style="top:285.1px;height:30px;line-height:30px;font-size:13.75px;color:#cbcbcb;left:823.3px;font-family:'Liberation Mono','Noto Sans CJK SC',monospace;"><span id="t72">    <span style="color:#86d2f7">"</span><span style="color:#f16a55">envId</span><span style="color:#86d2f7">"</span><span style="color:#6cc4f5">:</span> <span style="color:#86d2f7">"</span><span style="color:#f16a55">dev00-8gy6occtd338d3ce</span><span style="color:#86d2f7">"</span><span style="color:#6cc4f5">,</span></span></div>
<div class="a t " style="top:314.7px;height:30px;line-height:30px;font-size:13.75px;color:#515151;left:390.5px;width:400px;text-align:right;font-family:'Liberation Mono','Noto Sans CJK SC',monospace;"><span id="t73">15</span></div>
<div class="a t k" style="top:315.1px;height:30px;line-height:30px;font-size:13.75px;color:#cbcbcb;left:823.3px;font-family:'Liberation Mono','Noto Sans CJK SC',monospace;"><span id="t74">    <span style="color:#86d2f7">"</span><span style="color:#f16a55">functionName</span><span style="color:#86d2f7">"</span><span style="color:#6cc4f5">:</span> <span style="color:#86d2f7">"</span><span style="color:#f16a55">pay_cb</span><span style="color:#86d2f7">"</span></span></div>
<div class="a t " style="top:344.7px;height:30px;line-height:30px;font-size:13.75px;color:#515151;left:390.5px;width:400px;text-align:right;font-family:'Liberation Mono','Noto Sans CJK SC',monospace;"><span id="t75">16</span></div>
<div class="a t k" style="top:345.1px;height:30px;line-height:30px;font-size:13.75px;color:#cbcbcb;left:823.3px;font-family:'Liberation Mono','Noto Sans CJK SC',monospace;"><span id="t76">  <span style="color:#6cc4f5">})</span></span></div>
<div class="a t " style="top:374.7px;height:30px;line-height:30px;font-size:13.75px;color:#515151;left:390.5px;width:400px;text-align:right;font-family:'Liberation Mono','Noto Sans CJK SC',monospace;"><span id="t77">17</span></div>
<div class="a t k" style="top:375.1px;height:30px;line-height:30px;font-size:13.75px;color:#cbcbcb;left:823.3px;font-family:'Liberation Mono','Noto Sans CJK SC',monospace;"><span id="t78">  <span style="color:#7fd0ff">return</span> <span style="color:#cbcbcb">res</span></span></div>
<div class="a t " style="top:404.7px;height:30px;line-height:30px;font-size:13.75px;color:#515151;left:390.5px;width:400px;text-align:right;font-family:'Liberation Mono','Noto Sans CJK SC',monospace;"><span id="t79">18</span></div>
<div class="a t k" style="top:405.1px;height:30px;line-height:30px;font-size:13.75px;color:#cbcbcb;left:823.3px;font-family:'Liberation Mono','Noto Sans CJK SC',monospace;"><span id="t80"><span style="color:#6cc4f5">}</span></span></div>
<svg style="left:801px;top:79.5px" width="12.4" height="7.5" viewBox="0 0 12.4 7.5"><path d="M1 1l5.2 5.2L11.4 1" fill="none" stroke="#c5c5c5" stroke-width="1.3"/></svg>
<svg style="left:801px;top:109.5px" width="12.4" height="7.5" viewBox="0 0 12.4 7.5"><path d="M1 1l5.2 5.2L11.4 1" fill="none" stroke="#c5c5c5" stroke-width="1.3"/></svg>
<div class="a" style="left:736px;top:603px;width:1221px;height:1px;background:#444444;"></div>
<div class="a" style="left:736px;top:604px;width:1221px;height:109px;background:#333333;"></div>
<div class="a t " style="top:616.7px;height:20px;line-height:20px;font-size:13.3px;color:#ffffff;left:760.58px;letter-spacing:0.36px;"><span id="t81">调试器</span></div>
<div class="a" style="left:761px;top:643px;width:41px;height:1px;background:#f0f0f0;"></div>
<div class="a t " style="top:616.7px;height:20px;line-height:20px;font-size:13.3px;color:#9d9d9d;left:826.36px;letter-spacing:1.35px;"><span id="t82">问题</span></div>
<div class="a t " style="top:616.7px;height:20px;line-height:20px;font-size:13.3px;color:#9d9d9d;left:879.18px;letter-spacing:0.96px;"><span id="t83">输出</span></div>
<div class="a t " style="top:616.7px;height:20px;line-height:20px;font-size:13.3px;color:#9d9d9d;left:931.79px;letter-spacing:0.92px;"><span id="t84">终端</span></div>
<div class="a" style="left:736px;top:680px;width:1221px;height:1px;background:#3e4343;"></div>
<div class="a" style="left:855px;top:647px;width:82px;height:33px;background:#000000;"></div>
<div class="a t " style="top:652.6px;height:22px;line-height:22px;font-size:14.6px;color:#a6a6a6;left:802.8px;letter-spacing:0.13px;"><span id="t85">Wxml</span></div>
<div class="a t " style="top:652.6px;height:22px;line-height:22px;font-size:14.6px;color:#ffffff;left:869.72px;letter-spacing:-0.17px;"><span id="t86">Console</span></div>
<div class="a t " style="top:652.6px;height:22px;line-height:22px;font-size:14.6px;color:#a6a6a6;left:952.34px;letter-spacing:-0.41px;"><span id="t87">Sources</span></div>
<div class="a t " style="top:652.6px;height:22px;line-height:22px;font-size:14.6px;color:#a6a6a6;left:1032.66px;letter-spacing:0.49px;"><span id="t88">Network</span></div>
<div class="a t " style="top:652.6px;height:22px;line-height:22px;font-size:14.6px;color:#a6a6a6;left:1119.46px;letter-spacing:0.5px;"><span id="t89">Memory</span></div>
<div class="a t " style="top:652.6px;height:22px;line-height:22px;font-size:14.6px;color:#a6a6a6;left:1204.34px;letter-spacing:-0.08px;"><span id="t90">Security</span></div>
<div class="a t " style="top:652.6px;height:22px;line-height:22px;font-size:14.6px;color:#a6a6a6;left:1286.56px;letter-spacing:0.34px;"><span id="t91">Mock</span></div>
<div class="a t " style="top:652.6px;height:22px;line-height:22px;font-size:14.6px;color:#a6a6a6;left:1353.8px;letter-spacing:-0.07px;"><span id="t92">AppData</span></div>
<div class="a t " style="top:652.6px;height:22px;line-height:22px;font-size:14.6px;color:#a6a6a6;left:1441.3px;letter-spacing:0.22px;"><span id="t93">Audits</span></div>
<div class="a t " style="top:652.6px;height:22px;line-height:22px;font-size:14.6px;color:#a6a6a6;left:1512.04px;letter-spacing:-0.51px;"><span id="t94">Sensor</span></div>
<div class="a t " style="top:652.6px;height:22px;line-height:22px;font-size:14.6px;color:#a6a6a6;left:1585.84px;letter-spacing:-0.12px;"><span id="t95">Storage</span></div>
<div class="a t " style="top:652.6px;height:22px;line-height:22px;font-size:14.6px;color:#a6a6a6;left:1666.17px;letter-spacing:-0.77px;"><span id="t96">Trace</span></div>
<svg style="left:748.3px;top:654.6px" width="17" height="17" viewBox="0 0 18 18"><path d="M9.5 16.4H3.2a1.7 1.7 0 0 1-1.7-1.7V3.2a1.7 1.7 0 0 1 1.7-1.7h11.5a1.7 1.7 0 0 1 1.7 1.7v4.3" fill="none" stroke="#8c8c8c" stroke-width="1.5"/><path d="M7.3 7.6l3 9.6 2-3.3 3.9 3.9 1.5-1.5-3.9-3.9 3.3-2z" fill="#9a9a9a"/></svg>
<div class="a" style="left:779px;top:653px;width:1px;height:20px;background:#404040;"></div>
<svg style="left:746.2px;top:689.2px" width="19.2" height="16.6" viewBox="0 0 19.8 17.2"><rect x=".8" y=".8" width="18.2" height="15.6" fill="none" stroke="#8e8e8e" stroke-width="1.6"/><path d="M6 .8v15.6" stroke="#8e8e8e" stroke-width="1.6"/><path d="M9 4.6v8l6.3-4z" fill="#8e8e8e"/></svg>
<svg style="left:783.4px;top:689.1px" width="17" height="17" viewBox="0 0 17 17"><circle cx="8.5" cy="8.5" r="7.1" fill="none" stroke="#8e8e8e" stroke-width="2.4"/><path d="M3.4 3.4l10.2 10.2" stroke="#8e8e8e" stroke-width="2.4"/></svg>
<div class="a" style="left:814px;top:687px;width:1px;height:20px;background:#3e3e3e;"></div>
<div class="a" style="left:820px;top:681px;width:172px;height:32px;background:#560000;"></div>
<div class="a t " style="top:686.9px;height:22px;line-height:22px;font-size:14.8px;color:#a6a6a6;left:826.04px;letter-spacing:-0.16px;"><span id="t97">appservice</span></div>
<svg style="left:977.2px;top:693px" width="8.8" height="7.8" viewBox="0 0 8.8 7.8"><path d="M0 0h8.8L4.4 7.8z" fill="#9a9a9a"/></svg>
<div class="a" style="left:998px;top:687px;width:1px;height:20px;background:#3e3e3e;"></div>
<svg style="left:1011.2px;top:690px" width="20.4" height="14.4" viewBox="0 0 20.4 14.4"><path d="M10.2 0C5.6 0 1.8 3 0 7.2c1.8 4.2 5.600 7.2 10.2 7.2s8.400-3 10.2-7.200C18.6 3 14.8 0 10.200 0z" fill="#a3a3a3"/><circle cx="10.2" cy="7.200" r="4.6" fill="#333"/><circle cx="10.2" cy="7.200" r="2.7" fill="#a3a3a3"/></svg>
<div class="a" style="left:1044px;top:687px;width:1px;height:20px;background:#3e3e3e;"></div>
<div class="a" style="left:1054px;top:685px;width:382px;height:24px;background:#242424;"></div>
<div class="a t " style="top:688.1px;height:22px;line-height:22px;font-size:15px;color:#7a7a7a;left:1058.43px;letter-spacing:-0.18px;"><span id="t98">Filter</span></div>
<div class="a t " style="top:686.5px;height:22px;line-height:22px;font-size:14.8px;color:#a6a6a6;left:1445.74px;letter-spacing:-0.05px;"><span id="t99">Default levels</span></div>
<svg style="left:1541.4px;top:693.6px" width="7.8" height="7.4" viewBox="0 0 7.8 7.4"><path d="M0 0h7.8L3.9 7.4z" fill="#9a9a9a"/></svg>
<div class="a" style="left:736px;top:713px;width:1221px;height:1px;background:#313838;"></div>
<div class="a" style="left:736px;top:714px;width:1221px;height:1px;background:#4f4f4f;"></div>
<div class="a" style="left:736px;top:715px;width:1221px;height:311px;background:#242424;"></div>
<div class="a" style="left:736px;top:739px;width:1221px;height:1px;background:#3a3a3a;"></div>
<div class="a" style="left:736px;top:765px;width:1221px;height:1px;background:#3a3a3a;"></div>
<div class="a" style="left:736px;top:790px;width:1221px;height:1px;background:#3a3a3a;"></div>
<div class="a" style="left:736px;top:898px;width:1221px;height:85px;background:#290000;border-top:1px solid #5c0000;border-bottom:1px solid #5c0000;"></div>
<div class="a t k2" style="top:720px;height:20px;line-height:20px;font-size:13.75px;color:#d5d5d5;left:766.3px;font-family:'Liberation Mono','Noto Sans CJK SC',monospace;"><span id="t100">openID==== oQU2F4lMtdOxj7DK5n0MtGAWDLIY</span></div>
<div class="a t k2" style="top:745px;height:20px;line-height:20px;font-size:13.75px;color:#d5d5d5;left:766.3px;font-family:'Liberation Mono','Noto Sans CJK SC',monospace;"><span id="t101">goodname <span class="c">充值</span></span></div>
<div class="a t k2" style="top:770.8px;height:20px;line-height:20px;font-size:13.75px;color:#d5d5d5;left:766.3px;font-family:'Liberation Mono','Noto Sans CJK SC',monospace;"><span id="t102">fee <span style="color:#9980ff">1</span></span></div>
<div class="a t k2" style="top:797.3px;height:20px;line-height:20px;font-size:13.75px;color:#d5d5d5;left:766.3px;font-family:'Liberation Mono','Noto Sans CJK SC',monospace;"><span id="t103"><span class="c">获取参数成功！</span></span></div>
<svg style="left:887.3px;top:803px" width="9" height="6.6" viewBox="0 0 9 6.6"><path d="M0 0h9L4.5 6.6z" fill="#9a9a9a"/></svg>
<div class="a t k2" style="top:797.3px;height:20px;line-height:20px;font-size:13.75px;color:#d5d5d5;left:900.7px;font-family:'Liberation Mono','Noto Sans CJK SC',monospace;font-style:italic;"><span id="t104">{<span style="color:#a9a9a9">errMsg</span>: <span style="color:#e93f3b">"cloud.callFunction:ok"</span>, <span style="color:#a9a9a9">result</span>: {…}, <span style="color:#a9a9a9">requestID</span>: <span style="color:#e93f3b">"30c87176-8d80-11eb-8c51-525400357a82"</span>}</span></div>
<div class="a t k2" style="top:817px;height:20px;line-height:20px;font-size:13.75px;color:#d5d5d5;left:915.5px;font-family:'Liberation Mono','Noto Sans CJK SC',monospace;"><span id="t105"><span style="color:#e36eec">errMsg</span>: "<span style="color:#e93f3b">cloud.callFunction:ok</span>"</span></div>
<div class="a t k2" style="top:837px;height:20px;line-height:20px;font-size:13.75px;color:#d5d5d5;left:915.5px;font-family:'Liberation Mono','Noto Sans CJK SC',monospace;"><span id="t106"><span style="color:#e36eec">requestID</span>: "<span style="color:#e93f3b">30c87176-8d80-11eb-8c51-525400357a82</span>"</span></div>
<svg style="left:903.4px;top:861.4px" width="7.2" height="8.6" viewBox="0 0 7.2 8.6"><path d="M0 0v8.6L7.2 4.3z" fill="#9a9a9a"/></svg>
<div class="a" style="left:1253.75px;top:855px;width:220.6px;height:20px;background:#4a4a4a;"></div>
<div class="a t k2" style="top:857px;height:20px;line-height:20px;font-size:13.75px;color:#d5d5d5;left:915.5px;font-family:'Liberation Mono','Noto Sans CJK SC',monospace;"><span id="t107"><span style="color:#e36eec">result</span>: {<span style="color:#a9a9a9">returnCode</span>: <span style="color:#e93f3b">"FAIL"</span>, <span style="color:#a9a9a9">returnMsg</span>: <span style="color:#e93f3b">"sub_mch_id</span><span style="color:#e93f3b"><span class="c">与</span></span><span style="color:#e93f3b">sub_appid</span><span style="color:#e93f3b"><span class="c">不匹配</span></span><span style="color:#e93f3b">"</span>, <span style="color:#a9a9a9">errCode</span>: <span style="color:#9980ff">0</span>, <span style="color:#a9a9a9">errMsg</span>: <span style="color:#e93f3b">"cloudPay.unifiedOrder:ok"</span>}</span></div>
<svg style="left:903.4px;top:881.4px" width="7.2" height="8.6" viewBox="0 0 7.2 8.6"><path d="M0 0v8.6L7.2 4.3z" fill="#9a9a9a"/></svg>
<div class="a t k2" style="top:877px;height:20px;line-height:20px;font-size:13.75px;color:#d5d5d5;left:915.5px;font-family:'Liberation Mono','Noto Sans CJK SC',monospace;"><span id="t108"><span style="color:#8f4794">__proto__</span>: Object</span></div>
<div class="a" style="left:1707.9px;top:799.4px;width:13.4px;height:13.6px;background:#a4b0f5;border-radius:3px;"></div>
<div class="a t " style="top:799.8px;height:13px;line-height:13px;font-size:11px;color:#20242e;left:1514.7px;width:400px;text-align:center;font-family:'Liberation Mono','Noto Sans CJK SC',monospace;font-weight:bold;"><span id="t109">i</span></div>
<svg style="left:744.7px;top:904.2px" width="12.2" height="12.2" viewBox="0 0 12.2 12.2"><circle cx="6.1" cy="6.1" r="6.1" fill="#e5393f"/><path d="M3.6 3.6l5 5M8.6 3.6l-5 5" stroke="#fff" stroke-width="1.7"/></svg>
<svg style="left:768.3px;top:907.8px" width="7.2" height="8.6" viewBox="0 0 7.2 8.6"><path d="M0 0v8.6L7.2 4.3z" fill="#8a8a8a"/></svg>
<div class="a t k2" style="top:903.8px;height:20px;line-height:20px;font-size:13.75px;color:#f08888;left:778.8px;font-family:'Liberation Mono','Noto Sans CJK SC',monospace;"><span id="t110">pay fail</span></div>
<svg style="left:767.6px;top:928.2px" width="9" height="6.6" viewBox="0 0 9 6.6"><path d="M0 0h9L4.5 6.6z" fill="#8a8a8a"/></svg>
<div class="a t k2" style="top:923px;height:20px;line-height:20px;font-size:13.75px;color:#d5d5d5;left:780.3px;font-family:'Liberation Mono','Noto Sans CJK SC',monospace;font-style:italic;"><span id="t111">{<span style="color:#a9a9a9">errMsg</span>: <span style="color:#e93f3b">"requestPayment:fail parameter error: parameter.tim…er.paySign should be String instead of Undefined;"</span>}</span></div>
<div class="a" style="left:1710.7px;top:925.2px;width:13.4px;height:13.6px;background:#a4b0f5;border-radius:3px;"></div>
<div class="a t " style="top:925.6px;height:13px;line-height:13px;font-size:11px;color:#20242e;left:1517.5px;width:400px;text-align:center;font-family:'Liberation Mono','Noto Sans CJK SC',monospace;font-weight:bold;"><span id="t112">i</span></div>
<div class="a t k2" style="top:943px;height:20px;line-height:20px;font-size:13.75px;color:#d5d5d5;left:795.2px;font-family:'Liberation Mono','Noto Sans CJK SC',monospace;"><span id="t113"><span style="color:#e36eec">errMsg</span>: "<span style="color:#e93f3b">requestPayment:fail parameter error: parameter.timeStamp should be String instead of Undefined;parameter.nonceStr should be String instead of Undefined;parameter.package should be String instead of Undefined;parameter.paySign should be String instead of Undefined;</span>"</span></div>
<svg style="left:783px;top:967.2px" width="7.2" height="8.6" viewBox="0 0 7.2 8.6"><path d="M0 0v8.6L7.2 4.3z" fill="#8a8a8a"/></svg>
<div class="a t k2" style="top:963px;height:20px;line-height:20px;font-size:13.75px;color:#d5d5d5;left:795.2px;font-family:'Liberation Mono','Noto Sans CJK SC',monospace;"><span id="t114"><span style="color:#93479a">__proto__</span>: Object</span></div>
<svg style="left:747.6px;top:991.4px" width="7" height="9.2" viewBox="0 0 7 9.2"><path d="M1 1l4.6 3.6L1 8.2" fill="none" stroke="#367cf1" stroke-width="1.8"/></svg>
<div class="a" style="left:927.4px;top:791.8px;width:656.4px;height:119px;border:5px solid #fc2216;border-radius:7.5px;"></div>
</body></html>
